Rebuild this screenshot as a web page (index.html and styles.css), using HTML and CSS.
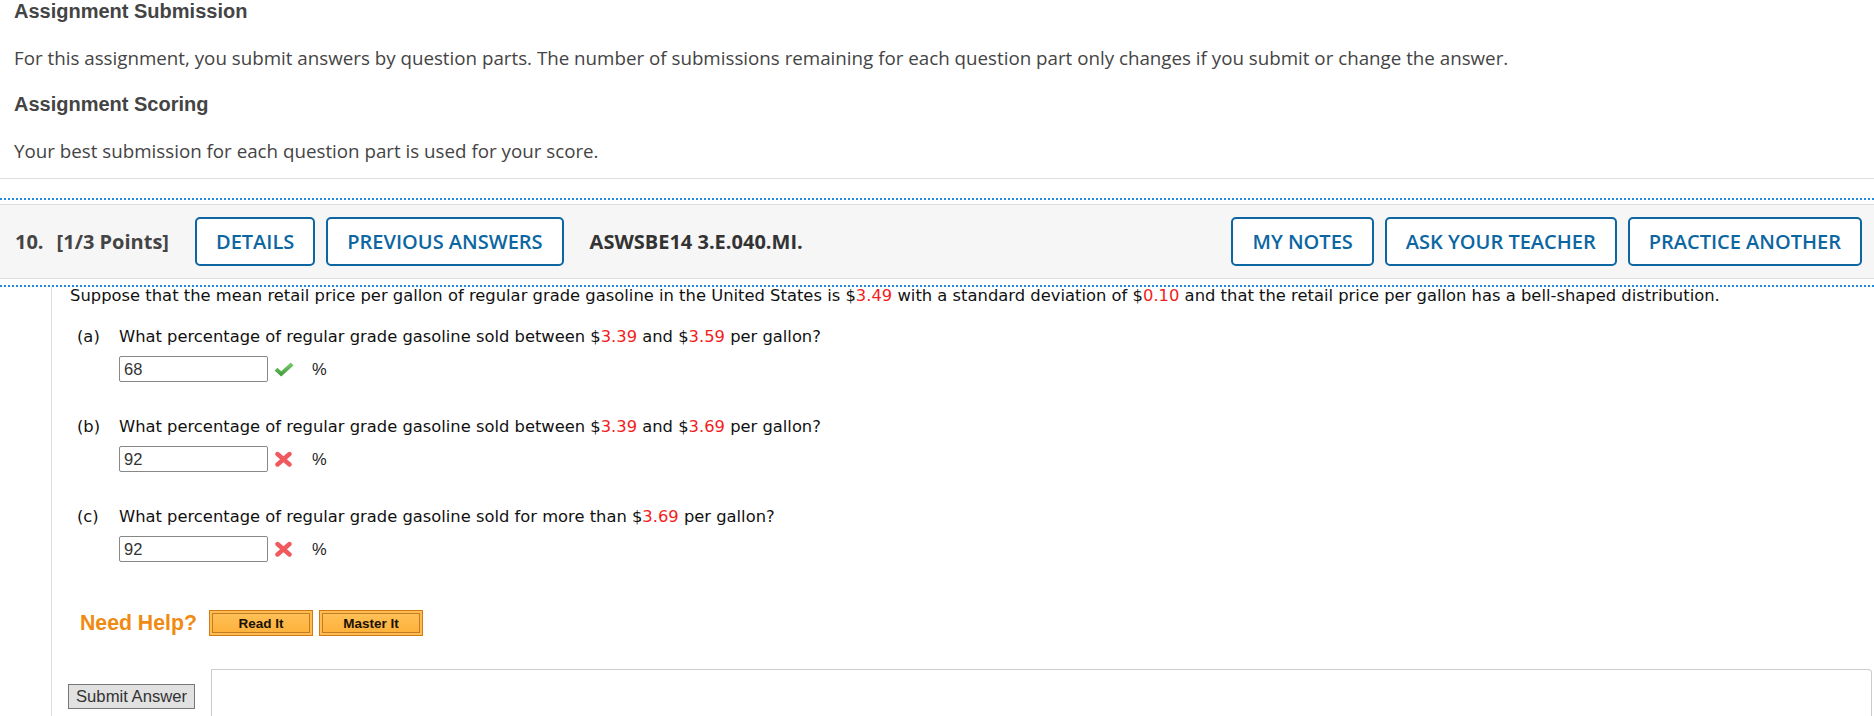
FILE: index.html
```html
<!DOCTYPE html>
<html>
<head>
<meta charset="utf-8">
<title>Assignment</title>
<link rel="stylesheet" href="styles.css">
</head>
<body>
<div class="intro">
  <h2 class="intro-title">Assignment Submission</h2>
  <p class="intro-text">For this assignment, you submit answers by question parts. The number of submissions remaining for each question part only changes if you submit or change the answer.</p>
  <h2 class="intro-title">Assignment Scoring</h2>
  <p class="intro-text">Your best submission for each question part is used for your score.</p>
</div>

<div class="question">
  <div class="qhead">
    <span class="qnum">10.</span>
    <span class="qpts">[1/3 Points]</span>
    <button class="hbtn first-btn">DETAILS</button>
    <button class="hbtn">PREVIOUS ANSWERS</button>
    <span class="qcode">ASWSBE14 3.E.040.MI.</span>
    <span class="spacer"></span>
    <button class="hbtn">MY NOTES</button>
    <button class="hbtn">ASK YOUR TEACHER</button>
    <button class="hbtn">PRACTICE ANOTHER</button>
  </div>

  <div class="qbody">
    <p class="stem">Suppose that the mean retail price per gallon of regular grade gasoline in the United States is $<span class="red">3.49</span> with a standard deviation of $<span class="red">0.10</span> and that the retail price per gallon has a bell-shaped distribution.</p>

    <div class="part">
      <div class="ptext"><span class="plabel">(a)</span>What percentage of regular grade gasoline sold between $<span class="red">3.39</span> and $<span class="red">3.59</span> per gallon?</div>
      <div class="pans">
        <input class="ans" type="text" value="68">
        <svg class="mark" width="20" height="15" viewBox="0 0 20 15"><defs><linearGradient id="g1" x1="0" y1="0" x2="0" y2="1"><stop offset="0" stop-color="#7ccb6e"/><stop offset="1" stop-color="#3f9a3c"/></linearGradient></defs><path d="M0.5 8.5 L3.5 5.8 L7.2 9.2 L16.8 0.6 L19.5 3.4 L7.2 14.4 Z" fill="url(#g1)"/></svg>
        <span class="unit">%</span>
      </div>
    </div>

    <div class="part">
      <div class="ptext"><span class="plabel">(b)</span>What percentage of regular grade gasoline sold between $<span class="red">3.39</span> and $<span class="red">3.69</span> per gallon?</div>
      <div class="pans">
        <input class="ans" type="text" value="92">
        <svg class="mark" width="20" height="16" viewBox="0 0 20 16"><g stroke="#f05a5e" stroke-width="4.4" stroke-linecap="round"><line x1="3.5" y1="3" x2="15.5" y2="13.5"/><line x1="15.5" y1="3" x2="3.5" y2="13.5"/></g></svg>
        <span class="unit">%</span>
      </div>
    </div>

    <div class="part">
      <div class="ptext"><span class="plabel">(c)</span>What percentage of regular grade gasoline sold for more than $<span class="red">3.69</span> per gallon?</div>
      <div class="pans">
        <input class="ans" type="text" value="92">
        <svg class="mark" width="20" height="16" viewBox="0 0 20 16"><g stroke="#f05a5e" stroke-width="4.4" stroke-linecap="round"><line x1="3.5" y1="3" x2="15.5" y2="13.5"/><line x1="15.5" y1="3" x2="3.5" y2="13.5"/></g></svg>
        <span class="unit">%</span>
      </div>
    </div>

    <div class="help">
      <span class="help-label">Need Help?</span>
      <button class="obtn">Read It</button>
      <button class="obtn">Master It</button>
    </div>

    <div class="submit-row">
      <button class="submit">Submit Answer</button>
      <div class="subbox"></div>
    </div>
  </div>
</div>
</body>
</html>
```
FILE: styles.css
```css
html, body {
  margin: 0;
  padding: 0;
  background: #ffffff;
  overflow: hidden;
}
body {
  width: 1874px;
  height: 716px;
  font-family: "Open Sans", "Liberation Sans", sans-serif;
}

.intro {
  padding: 0 0 15px 14px;
  border-bottom: 1px solid #dddddd;
}
.intro-title {
  margin: 23px 0 0 0;
  font-family: "Liberation Sans", Arial, sans-serif;
  font-weight: 700;
  font-size: 20px;
  line-height: 23px;
  color: #444444;
}
.intro-title:first-child {
  margin-top: 0;
}
.intro-text {
  margin: 23px 0 0 0;
  font-family: "Open Sans", sans-serif;
  font-size: 18.75px;
  line-height: 24px;
  color: #444444;
}

.question {
  margin-top: 19px;
  border-top: 2px dotted #1f8ae0;
  padding-top: 4px;
}
.qhead {
  display: flex;
  align-items: center;
  height: 73px;
  background: #f6f6f6;
  border-top: 1px solid #dddddd;
  border-bottom: 1px solid #dddddd;
  padding: 0 12px 0 15px;
  font-family: "Open Sans", sans-serif;
  font-size: 20px;
  color: #444444;
}
.qnum {
  font-weight: 700;
  margin-right: 13px;
}
.qpts {
  font-weight: 700;
  margin-right: 26px;
}
.qcode {
  font-weight: 700;
  color: #333333;
  margin-left: 26px;
}
.spacer {
  flex: 1;
}
.hbtn {
  height: 49px;
  box-sizing: border-box;
  border: 2px solid #0c66a2;
  border-radius: 5px;
  background: #ffffff;
  color: #0c66a2;
  font-family: "Open Sans", sans-serif;
  font-weight: 600;
  font-size: 20px;
  padding: 0 19px;
  margin-left: 11px;
  white-space: nowrap;
}
.hbtn.first-btn {
  margin-left: 0;
}

.qbody {
  margin-top: 6px;
  border-top: 2px dotted #1f8ae0;
  padding: 0 2px 0 0;
}
.stem, .part, .help, .submit-row {
  margin-left: 51px;
  border-left: 1px solid #dddddd;
  padding-left: 18px;
}
.stem {
  margin-top: 0;
  margin-bottom: 0;
  padding-bottom: 23px;
  font-family: "DejaVu Sans", Verdana, sans-serif;
  font-size: 16.38px;
  line-height: 18px;
  color: #111111;
}
.red {
  color: #f41d1d;
}
.part {
  padding-bottom: 36px;
  font-family: "DejaVu Sans", Verdana, sans-serif;
  font-size: 16.33px;
  line-height: 18px;
  color: #111111;
}
.plabel {
  display: inline-block;
  width: 42px;
  padding-left: 7px;
}
.pans {
  display: flex;
  align-items: center;
  margin-top: 10px;
  padding-left: 49px;
}
.ans {
  width: 149px;
  height: 26px;
  box-sizing: border-box;
  border: 1px solid #888888;
  border-radius: 2px;
  padding: 0 4px;
  font-family: "Liberation Sans", Arial, sans-serif;
  font-size: 16.5px;
  color: #333333;
  background: #ffffff;
}
.mark {
  margin-left: 6px;
}
.unit {
  margin-left: 18px;
  font-family: "Liberation Sans", Arial, sans-serif;
  font-size: 16.5px;
  color: #222222;
}

.help {
  display: flex;
  align-items: center;
  padding-top: 12px;
  padding-bottom: 33px;
}
.help-label {
  margin-left: 10px;
  margin-right: 12px;
  font-family: "Liberation Sans", Arial, sans-serif;
  font-weight: 700;
  font-size: 21.25px;
  color: #f08a12;
}
.obtn {
  width: 104px;
  height: 26px;
  box-sizing: border-box;
  border: 1px solid #d27a16;
  background: linear-gradient(#ffc25a, #fdb037);
  box-shadow: inset 0 0 0 2px #ffbd4f, inset 0 0 0 3px #c47a26;
  font-family: "Liberation Sans", Arial, sans-serif;
  font-weight: 700;
  font-size: 13.5px;
  color: #1b1206;
  margin-right: 6px;
  padding: 0;
}

.submit-row {
  display: flex;
  align-items: flex-start;
  height: 60px;
}
.submit {
  margin-top: 15px;
  margin-left: -2px;
  height: 25px;
  box-sizing: border-box;
  border: 1px solid #777777;
  background: #e1e1e1;
  font-family: "Liberation Sans", Arial, sans-serif;
  font-size: 16.67px;
  color: #333333;
  padding: 0 7px;
  white-space: nowrap;
}
.subbox {
  flex: 1;
  margin-left: 16px;
  height: 80px;
  border: 1px solid #cccccc;
  border-bottom: none;
  border-top-right-radius: 4px;
}
```
